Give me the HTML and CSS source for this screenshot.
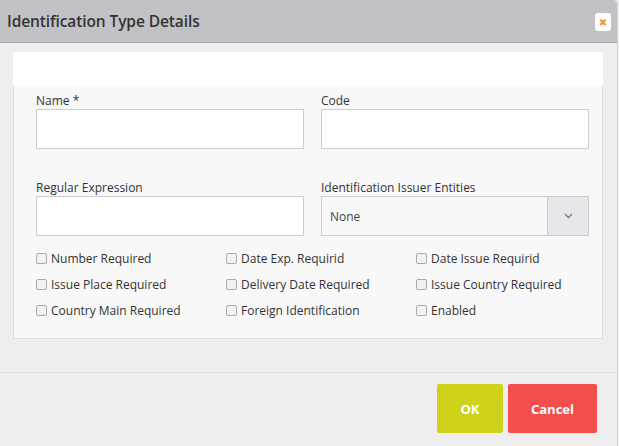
FILE: index.html
```html
<!DOCTYPE html>
<html>
<head>
<meta charset="utf-8">
<link rel="stylesheet" href="styles.css">
</head>
<body>
<div class="dialog">
  <div class="header">
    <span class="title">Identification Type Details</span>
    <span class="close">&#x2716;</span>
  </div>
  <div class="content">
    <div class="strip"></div>
    <div class="panel">
      <div class="grid">
        <div class="field">
          <label>Name *</label>
          <div class="input"></div>
        </div>
        <div class="field">
          <label>Code</label>
          <div class="input"></div>
        </div>
        <div class="field">
          <label>Regular Expression</label>
          <div class="input"></div>
        </div>
        <div class="field">
          <label>Identification Issuer Entities</label>
          <div class="select">
            <span class="sel-text">None</span>
            <span class="sel-btn"><svg width="9" height="6" viewBox="0 0 9 6"><path d="M1 1 L4.5 4.5 L8 1" fill="none" stroke="#777" stroke-width="1.3"/></svg></span>
          </div>
        </div>
      </div>
      <div class="checks">
        <div class="check"><span class="box"></span>Number Required</div>
        <div class="check"><span class="box"></span>Date Exp. Requirid</div>
        <div class="check"><span class="box"></span>Date Issue Requirid</div>
        <div class="check"><span class="box"></span>Issue Place Required</div>
        <div class="check"><span class="box"></span>Delivery Date Required</div>
        <div class="check"><span class="box"></span>Issue Country Required</div>
        <div class="check"><span class="box"></span>Country Main Required</div>
        <div class="check"><span class="box"></span>Foreign Identification</div>
        <div class="check"><span class="box"></span>Enabled</div>
      </div>
    </div>
  </div>
  <div class="footer">
    <button class="btn ok">OK</button>
    <button class="btn cancel">Cancel</button>
  </div>
</div>
</body>
</html>
```
FILE: styles.css
```css
html, body {
  margin: 0;
  padding: 0;
  background: #f4f4f4;
  font-family: "Open Sans", "DejaVu Sans", sans-serif;
  color: #333;
}
.dialog {
  width: 617px;
  height: 446px;
  background: #eeeeee;
  border-right: 1px solid #d6d6d6;
}
.header {
  height: 42px;
  background: #c1c2c6;
  border-bottom: 1px solid #a9aaae;
  border-top-right-radius: 4px;
  display: flex;
  align-items: center;
  justify-content: space-between;
  padding: 0 6px 0 7px;
}
.title {
  font-size: 15.5px;
  font-weight: 600;
  color: #333;
  letter-spacing: -0.1px;
}
.close {
  width: 16px;
  height: 18px;
  background: #fff;
  border-radius: 3px;
  color: #f39a26;
  font-size: 10px;
  font-weight: 700;
  display: flex;
  align-items: center;
  justify-content: center;
  margin-top: 1px;
}
.content {
  padding: 9px 14px 0 13px;
}
.strip {
  height: 34px;
  background: #fff;
}
.panel {
  background: #f8f8f8;
  border: 1px solid #dddddd;
  border-top: none;
  padding: 7px 13px 15px 22px;
}
.grid {
  display: grid;
  grid-template-columns: 268px 268px;
  column-gap: 17px;
  row-gap: 31px;
}
.field label {
  display: block;
  font-size: 12px;
  line-height: 16px;
  height: 16px;
  color: #333;
}
.input {
  height: 38px;
  background: #fff;
  border: 1px solid #cccccc;
}
.select {
  height: 38px;
  background: #f8f8f8;
  border: 1px solid #cccccc;
  display: flex;
  align-items: center;
}
.sel-text {
  flex: 1;
  padding-left: 8px;
  font-size: 12px;
  color: #444;
}
.sel-btn {
  width: 40px;
  height: 100%;
  background: #e7e7eb;
  border-left: 1px solid #cccccc;
  display: flex;
  align-items: center;
  justify-content: center;
}
.checks {
  margin-top: 9px;
  display: grid;
  grid-template-columns: 190px 190px 170px;
}
.check {
  height: 26px;
  display: flex;
  align-items: center;
  font-size: 12px;
  color: #333;
}
.box {
  width: 9px;
  height: 9px;
  border: 1px solid #aaa;
  border-radius: 2px;
  background: #f2f2f2;
  margin-right: 4px;
  margin-left: 0;
}
.footer {
  margin-top: 33px;
  border-top: 1px solid #dddddd;
  padding: 11px 20px 0 0;
  display: flex;
  justify-content: flex-end;
  gap: 5px;
}
.btn {
  border: none;
  border-radius: 2px;
  height: 49px;
  color: #fff;
  font-family: "Open Sans", "DejaVu Sans", sans-serif;
  font-weight: 700;
  font-size: 13px;
  padding: 0;
}
.ok {
  width: 66px;
  background: #cfd21a;
}
.cancel {
  width: 89px;
  background: #f24e4c;
}
```
